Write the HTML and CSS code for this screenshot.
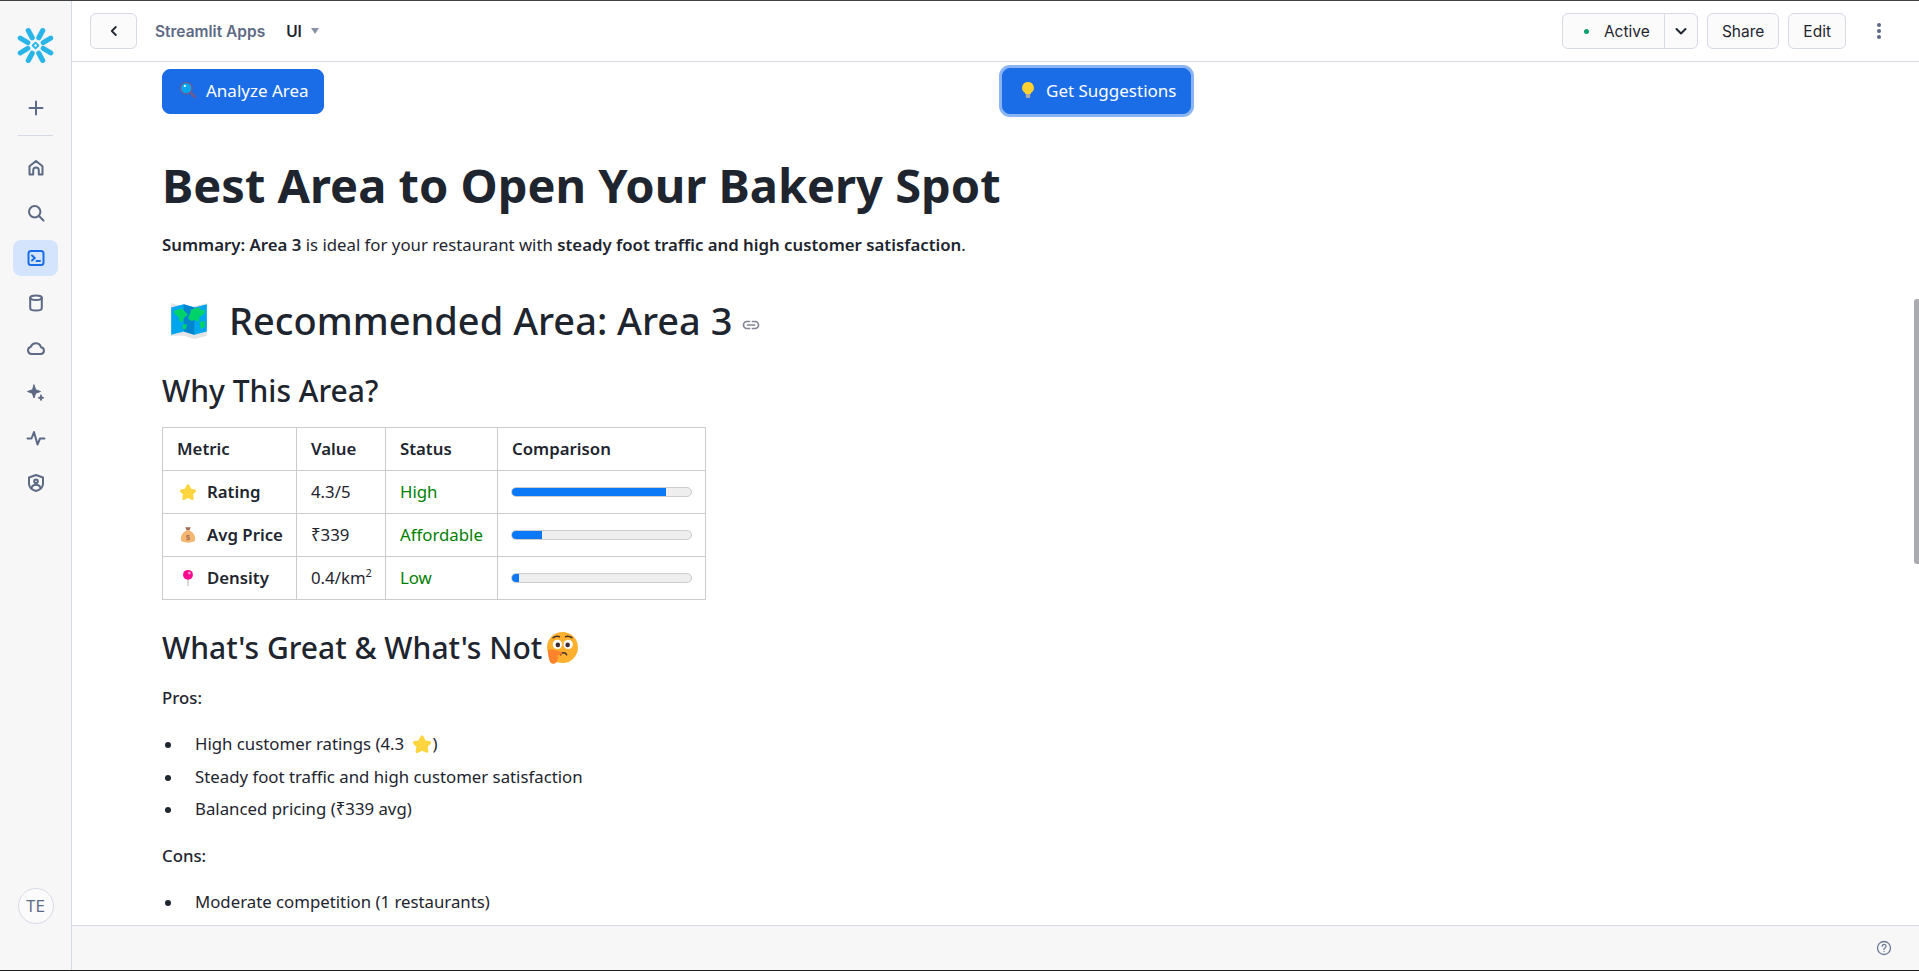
FILE: index.html
```html
<!DOCTYPE html>
<html lang="en">

<head>
	<meta charset="utf-8">
	<title>Streamlit Apps - UI</title>
	<link rel="stylesheet" href="styles.css">
</head>

<body>
	<svg class="defs" width="0" height="0">
		<symbol id="star" viewBox="0 0 20 20">
			<path d="M10 1.500c.8 0 1.300.5 1.700 1.300l1.800 3.700 4 .6c1.700.3 2.200 1.700 1 2.900l-2.900 2.800.7 4c.3 1.700-1 2.500-2.400 1.800L10 16.700l-3.900 2c-1.400.7-2.700-.1-2.400-1.800l.7-4L1.500 10c-1.200-1.200-.7-2.600 1-2.900l4-.6 1.800-3.700c.4-.8.9-1.300 1.700-1.300z" fill="#fcd53f"/>
		</symbol>
	</svg>
	<aside class="sidebar">
		<svg class="logo" viewBox="-18 -18 36 36" width="37" height="37" fill="none" stroke="#29b5e8" stroke-width="5" stroke-linecap="round" stroke-linejoin="round">
			<path d="M-7-14.500L-3.200-7.500M7-14.500L3.200-7.500M-7 14.500L-3.200 7.500M7 14.500L3.200 7.500"/>
			<path d="M-14.800-7.200L-7.500-2.800M-14.800 7.200L-7.500 2.800M14.800-7.200L7.500-2.800M14.800 7.200L7.500 2.800"/>
			<path d="M0-2.800L2.800 0 0 2.800-2.800 0z" stroke-width="1.800"/>
		</svg>
		<div class="side-item side-plus">
			<svg class="icon" viewBox="0 0 20 20"><path d="M10 3.500v13M3.500 10h13"/></svg>
		</div>
		<div class="side-rule"></div>
		<div class="side-item">
			<svg class="icon" viewBox="0 0 20 20"><path d="M3.500 16.500V8.300L10 3l6.500 5.300v8.200h-3.700v-4.300a2.800 2.800 0 0 0-5.600 0v4.300z"/></svg>
		</div>
		<div class="side-item">
			<svg class="icon" viewBox="0 0 20 20"><circle cx="8.700" cy="8.700" r="5.700"/><path d="M13 13l4.500 4.500"/></svg>
		</div>
		<div class="side-item side-active">
			<svg class="icon" viewBox="0 0 20 20"><rect x="2.500" y="3" width="15" height="14" rx="2.500"/><path d="M6 7.500L8.800 10 6 12.500M10.500 13h3.500"/></svg>
		</div>
		<div class="side-item">
			<svg class="icon" viewBox="0 0 20 20"><ellipse cx="10" cy="4.800" rx="5.800" ry="2.300"/><path d="M4.200 4.800v10.400c0 1.300 2.600 2.300 5.800 2.300s5.800-1 5.800-2.300V4.800"/></svg>
		</div>
		<div class="side-item">
			<svg class="icon" viewBox="0 0 20 20"><path d="M5.500 16a3.700 3.700 0 0 1-.6-7.300 5.300 5.300 0 0 1 10.100.6 3.400 3.400 0 0 1 .2 6.700z"/></svg>
		</div>
		<div class="side-item">
			<svg class="icon icon-solid" viewBox="0 0 20 20"><path d="M8 2l1.700 4.800 4.800 1.700-4.800 1.700L8 15l-1.700-4.800-4.800-1.700 4.800-1.700z"/><path d="M15 12l.8 2 2 .8-2 .8-.8 2-.8-2-2-.8 2-.8z"/></svg>
		</div>
		<div class="side-item">
			<svg class="icon" viewBox="0 0 20 20"><path d="M1.500 10.500h4L8 4l3.500 12.500 2.500-6h4.500"/></svg>
		</div>
		<div class="side-item">
			<svg class="icon" viewBox="0 0 20 20"><path d="M10 2l7 2.500v6c0 3.500-3 6.300-7 7.500-4-1.200-7-4-7-7.500v-6z"/><circle cx="10" cy="8.300" r="1.800"/><path d="M5.700 14.300c.8-1.700 2.400-2.500 4.300-2.500s3.500.8 4.300 2.500"/></svg>
		</div>
		<div class="avatar">TE</div>
	</aside>

	<div class="main">
		<header class="topbar">
			<button class="tool-btn back-btn">
				<svg viewBox="0 0 12 12" width="12" height="12" fill="none" stroke="#1e252f" stroke-width="1.800" stroke-linecap="round" stroke-linejoin="round"><path d="M7.800 2L3.800 6l4 4"/></svg>
			</button>
			<span class="crumb">Streamlit Apps</span>
			<span class="crumb-app">UI</span>
			<span class="caret"></span>
			<div class="top-right">
				<div class="active-group">
					<span class="active-label"><i class="dot"></i>Active</span>
					<span class="active-more">
						<svg viewBox="0 0 14 14" width="14" height="14" fill="none" stroke="#1e252f" stroke-width="2" stroke-linecap="round" stroke-linejoin="round"><path d="M2.500 5l4.500 4.500L11.500 5"/></svg>
					</span>
				</div>
				<button class="tool-btn text-btn">Share</button>
				<button class="tool-btn text-btn">Edit</button>
				<div class="kebab"><i></i><i></i><i></i></div>
			</div>
		</header>

		<main class="content">
			<div class="button-row">
				<div><button class="st-btn">
					<svg class="emoji-sm" viewBox="0 0 20 20"><path d="M12 12l5.500 5.500" stroke="#6b5b95" stroke-width="3.400" stroke-linecap="round"/><circle cx="8" cy="8" r="6.500" fill="#00a6ed" stroke="#6b5b95" stroke-width="1.600"/><circle cx="6.500" cy="5.500" r="1.300" fill="#d6f3ff"/></svg>
					Analyze Area</button></div>
				<div><button class="st-btn st-btn-focus">
					<svg class="emoji-sm" viewBox="0 0 20 20"><path d="M10 1a6.500 6.500 0 0 0-3.800 11.800c.6.500.8 1 .8 1.700h6c0-.7.200-1.200.8-1.700A6.500 6.500 0 0 0 10 1z" fill="#ffd02f"/><path d="M7.500 14.500h5v3a1.500 1.500 0 0 1-1.500 1.500H9a1.500 1.500 0 0 1-1.500-1.500z" fill="#a9a9ac"/></svg>
					Get Suggestions</button></div>
			</div>

			<h1 class="page-title">Best Area to Open Your Bakery Spot</h1>
			<p class="summary"><b>Summary: Area 3</b> is ideal for your restaurant with <b>steady foot traffic and high customer satisfaction</b>.</p>

			<h2 class="area-title">
				<svg class="map-emoji" viewBox="0 0 40 36"><path d="M3 2l12 3 10 0 12-3v31l-12 3-10-3-12 0z" fill="#e4e4e6"/><path d="M3 6l12-3 10 3 12-3v26l-12 3-10-3-12 3z" fill="#00a6ed"/><path d="M15 3l10 3v26l-10-3z" fill="#0084ce"/><path d="M6 9l7-2 3 3 3 3-4 3-1 4-3-1-1-4-4-3zM22 8l7-2 3 3 3-1v4l-5 3-1 5-3-2-4 1-3-3 2-4zM30 20l5-1v6l-4 1zM14 22l4 0-1 5-3-1z" fill="#00d26a"/></svg>
				Recommended Area: Area 3
				<svg class="link-icon" viewBox="0 0 20 20" width="20" height="20" fill="none" stroke="#808495" stroke-width="1.700" stroke-linecap="round"><path d="M8.500 6.500H6a3.500 3.500 0 0 0 0 7h2.500M11.500 6.500H14a3.500 3.500 0 0 1 0 7h-2.500M6.500 10h7"/></svg>
			</h2>

			<h3 class="sub-title why-title">Why This Area?</h3>
			<table class="metrics">
				<tr>
					<th class="col-metric">Metric</th>
					<th class="col-value">Value</th>
					<th class="col-status">Status</th>
					<th class="col-compare">Comparison</th>
				</tr>
				<tr>
					<th class="row-name"><svg class="emoji-cell" viewBox="0 0 20 20"><use href="#star"/></svg>Rating</th>
					<td>4.3/5</td>
					<td class="status">High</td>
					<td><div class="bar"><div class="bar-fill" style="width: 86%"></div></div></td>
				</tr>
				<tr>
					<th class="row-name"><svg class="emoji-cell" viewBox="0 0 20 20"><path d="M7 1.500h6l-1.500 3.500h-3z" fill="#a56953"/><path d="M8 5h4c3.500 2 6 5.500 6 9 0 3.500-3 4.500-8 4.500S2 17.500 2 14c0-3.500 2.500-7 6-9z" fill="#f3b772"/><text x="10" y="15.500" font-size="8" text-anchor="middle" fill="#a56953" font-family="Liberation Sans">$</text></svg>Avg Price</th>
					<td>₹339</td>
					<td class="status">Affordable</td>
					<td><div class="bar"><div class="bar-fill" style="width: 17%"></div></div></td>
				</tr>
				<tr>
					<th class="row-name"><svg class="emoji-cell" viewBox="0 0 20 20"><path d="M10 11v8" stroke="#c4c4c4" stroke-width="1.400"/><circle cx="10" cy="6.500" r="5.500" fill="#f70a8d"/><circle cx="11.500" cy="4.500" r="1.500" fill="#ff9bd0"/></svg>Density</th>
					<td>0.4/km<sup>2</sup></td>
					<td class="status">Low</td>
					<td><div class="bar"><div class="bar-fill" style="width: 4%"></div></div></td>
				</tr>
			</table>

			<h3 class="sub-title great-title">What's Great &amp; What's Not<svg class="face-emoji" viewBox="0 0 32 32"><circle cx="16" cy="15" r="15" fill="#ffb02e"/><circle cx="11" cy="12" r="4.500" fill="#fff"/><circle cx="21.500" cy="12" r="4.500" fill="#fff"/><circle cx="11.500" cy="12.500" r="2.200" fill="#402a32"/><circle cx="21" cy="12.500" r="2.200" fill="#402a32"/><path d="M7 5.500c2-1.500 4-1.800 6-1M19 4.500c2-.8 4-.5 6 1M14 22c1-2.500 5-2.500 6 0" fill="none" stroke="#402a32" stroke-width="1.500" stroke-linecap="round"/><path d="M2 19c0-2 2-3 4-2l8 2c2 .5 2 3 0 3l-3 .5c1 2 .5 5-1 7-2 2-5 1.500-6-.5-1.500-3-2-6-2-10z" fill="#ff822d"/></svg></h3>
			<p class="list-head">Pros:</p>
			<ul class="points">
				<li>High customer ratings (4.3 <svg class="emoji-inline" viewBox="0 0 20 20"><use href="#star"/></svg>)</li>
				<li>Steady foot traffic and high customer satisfaction</li>
				<li>Balanced pricing (₹339 avg)</li>
			</ul>
			<p class="list-head">Cons:</p>
			<ul class="points">
				<li>Moderate competition (1 restaurants)</li>
			</ul>
		</main>

		<footer class="footer">
			<svg viewBox="0 0 16 16" width="16" height="16" fill="none" stroke="#6b7a94" stroke-width="1.300" stroke-linecap="round"><circle cx="8" cy="8" r="6.500"/><path d="M6.200 6.300a1.900 1.900 0 1 1 2.800 1.700c-.6.300-1 .7-1 1.400"/><path d="M8 11.500v.1"/></svg>
		</footer>
		<div class="scroll-thumb"></div>
	</div>
</body>

</html>
```

FILE: styles.css
```css
* {
	box-sizing: border-box;
}

html, body {
	margin: 0;
	padding: 0;
	height: 100%;
	overflow: hidden;
}

body {
	display: flex;
	border-top: 1px solid #3f4245;
	border-bottom: 1px solid #1c1c1c;
	font-family: "Noto Sans", "Open Sans", sans-serif;
	color: #1e252f;
	background: #fff;
}

.defs {
	position: absolute;
}

/* Left rail */
.sidebar {
	width: 72px;
	flex: none;
	display: flex;
	flex-direction: column;
	align-items: center;
	padding-top: 26px;
	background: #f7f7f7;
	border-right: 1px solid #d5dae5;
}

.logo {
	flex: none;
	margin-bottom: 26px;
}

.icon {
	width: 20px;
	height: 20px;
	fill: none;
	stroke: #5d6a85;
	stroke-width: 2;
	stroke-linecap: round;
	stroke-linejoin: round;
}

.icon-solid {
	fill: #5d6a85;
	stroke-width: 1;
}

.side-item {
	width: 45px;
	height: 36px;
	margin-bottom: 9px;
	flex: none;
	display: flex;
	align-items: center;
	justify-content: center;
	border-radius: 8px;
}

.side-rule {
	width: 35px;
	height: 1px;
	flex: none;
	margin-bottom: 14px;
	background: #d5dae5;
}

.side-active {
	background: #d4e4fc;
}

.side-active .icon {
	stroke: #1a6ce7;
}

.avatar {
	width: 36px;
	height: 36px;
	margin-top: auto;
	margin-bottom: 46px;
	display: flex;
	align-items: center;
	justify-content: center;
	border: 1px solid #d5dae5;
	border-radius: 50%;
	background: #fbfbfc;
	font-family: Inter, sans-serif;
	font-size: 15.500px;
	color: #5d6a85;
}

/* Right side */
.main {
	flex: 1;
	min-width: 0;
	display: flex;
	flex-direction: column;
	position: relative;
}

.topbar {
	height: 61px;
	flex: none;
	display: flex;
	align-items: center;
	padding: 0 0 0 18px;
	border-bottom: 1px solid #d5dae5;
	font-family: Inter, sans-serif;
	font-size: 15.500px;
}

.tool-btn {
	height: 36px;
	border: 1px solid #d5dae5;
	border-radius: 6px;
	background: #fbfbfc;
	font-family: Inter, sans-serif;
	font-size: 15.500px;
	color: #1e252f;
}

.back-btn {
	width: 47px;
	padding: 0;
	display: flex;
	align-items: center;
	justify-content: center;
}

.crumb {
	margin-left: 18px;
	font-weight: 600;
	color: #5d6a85;
}

.crumb-app {
	margin-left: 21px;
	font-weight: 600;
}

.caret {
	width: 0;
	height: 0;
	margin-left: 9px;
	border-left: 4.500px solid transparent;
	border-right: 4.500px solid transparent;
	border-top: 6px solid #8a93a5;
}

.top-right {
	margin-left: auto;
	display: flex;
	align-items: center;
	gap: 9px;
}

.active-group {
	width: 136px;
	height: 36px;
	display: flex;
	border: 1px solid #d5dae5;
	border-radius: 6px;
	background: #fbfbfc;
}

.active-label {
	flex: 1;
	display: flex;
	align-items: center;
	padding-left: 21px;
	border-right: 1px solid #d5dae5;
}

.dot {
	width: 5px;
	height: 5px;
	margin-right: 15px;
	border-radius: 50%;
	background: #0d9f6e;
}

.active-more {
	width: 32px;
	display: flex;
	align-items: center;
	justify-content: center;
}

.text-btn {
	padding: 0 14px;
}

.kebab {
	width: 4px;
	margin: 0 38px 0 22px;
	display: flex;
	flex-direction: column;
	gap: 2px;
}

.kebab i {
	width: 4px;
	height: 4px;
	border-radius: 50%;
	background: #5d6a85;
}

/* Page body */
.content {
	flex: 1;
	min-height: 0;
	overflow: hidden;
	padding: 6px 0 0 90px;
}

.button-row {
	display: grid;
	grid-template-columns: 840px 1fr;
	align-items: center;
	height: 45px;
}

.st-btn {
	height: 45px;
	display: inline-flex;
	align-items: center;
	gap: 9px;
	padding: 0 14px 2px 16px;
	border: 1px solid #1a6ce7;
	border-radius: 8px;
	background: #1a6ce7;
	font-family: inherit;
	font-size: 17px;
	color: #fff;
}

.st-btn-focus {
	height: 46px;
	box-shadow: 0 0 0 3px #8ab4f3;
}

.emoji-sm {
	width: 18px;
	height: 18px;
}

.page-title {
	margin: 38px 0 0;
	font-size: 47px;
	line-height: 68px;
	font-weight: 700;
	white-space: nowrap;
}

.summary {
	margin: 14px 0 0;
	font-size: 16.800px;
	line-height: 24px;
}

.summary b {
	font-weight: 600;
}

.area-title {
	margin: 36px 0 0;
	display: flex;
	align-items: center;
	font-size: 38px;
	line-height: 54px;
	font-weight: 500;
}

.map-emoji {
	width: 42px;
	height: 38px;
	margin: 0 19px 0 6px;
}

.link-icon {
	margin: 9px 0 0 9px;
}

.sub-title {
	margin: 0;
	font-size: 30px;
	line-height: 40px;
	font-weight: 500;
}

.why-title {
	margin-top: 24px;
}

.great-title {
	margin-top: 28px;
	display: flex;
	align-items: center;
}

.face-emoji {
	width: 33px;
	height: 33px;
	margin-left: 4px;
}

.metrics {
	margin-top: 16px;
	border-collapse: collapse;
	table-layout: fixed;
	width: 544px;
	font-size: 16.800px;
}

.metrics th, .metrics td {
	height: 43px;
	padding: 0 14px 2px;
	border: 1px solid #ccc;
	text-align: left;
	white-space: nowrap;
}

.metrics th {
	font-weight: 600;
}

.col-metric {
	width: 134px;
}

.col-value {
	width: 89px;
}

.col-status {
	width: 112px;
}

.row-name {
	padding-left: 16px !important;
}

.emoji-cell {
	width: 18px;
	height: 18px;
	margin-right: 10px;
	vertical-align: -3px;
}

.status {
	color: green;
}

.metrics sup {
	font-size: 11px;
	line-height: 0;
}

.bar {
	height: 10px;
	margin: 2px -1px 0;
	border: 1px solid #ccc;
	border-radius: 5px;
	background: #eee;
	overflow: hidden;
}

.bar-fill {
	height: 100%;
	background: #0b78f5;
}

.list-head {
	margin: 18px 0 0;
	font-size: 16.800px;
	line-height: 24px;
	font-weight: 500;
}

.points {
	margin: 18px 0 0;
	padding-left: 33px;
	list-style: none;
	font-size: 16.800px;
	line-height: 32.500px;
}

.points li::before {
	content: "";
	display: inline-block;
	width: 6px;
	height: 6px;
	margin-left: -30px;
	margin-right: 24px;
	border-radius: 50%;
	background: #1e252f;
	vertical-align: 2px;
}

.points + .list-head {
	margin-top: 18px;
}

.emoji-inline {
	width: 20px;
	height: 20px;
	margin: 0 1px 0 3px;
	vertical-align: -4px;
}

.footer {
	height: 45px;
	flex: none;
	display: flex;
	align-items: center;
	justify-content: flex-end;
	padding-right: 27px;
	background: #f7f7f7;
	border-top: 1px solid #d5dae5;
}

.scroll-thumb {
	position: absolute;
	top: 298px;
	right: 0;
	width: 5px;
	height: 265px;
	border-radius: 3px 0 0 3px;
	background: #a9abaf;
}
```
